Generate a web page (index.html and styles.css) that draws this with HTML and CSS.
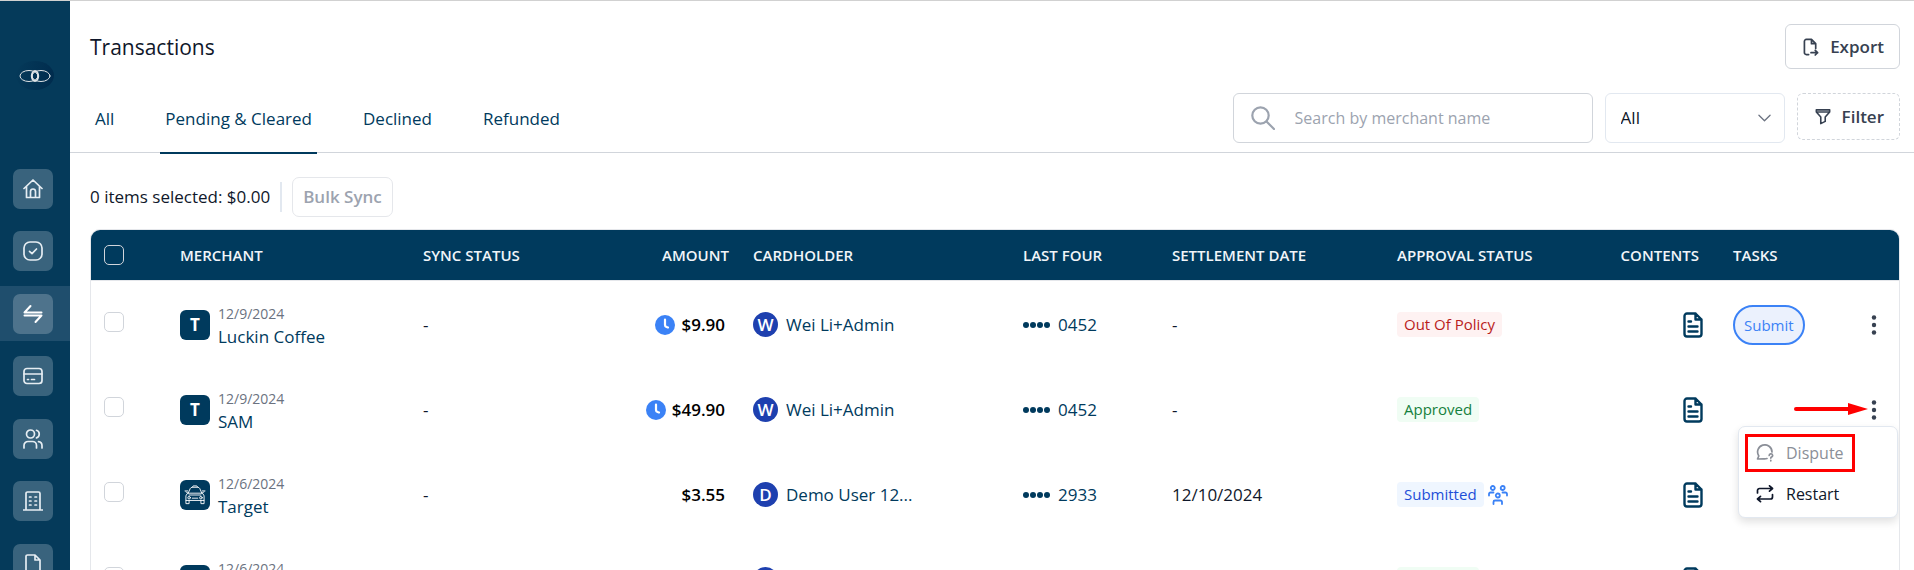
FILE: index.html
```html
<!DOCTYPE html>
<html lang="en">
<head>
    <meta charset="utf-8">
    <title>Transactions</title>
    <link rel="stylesheet" href="styles.css">
</head>
<body>
<svg class="sprite" aria-hidden="true">
    <symbol id="i-doc" viewBox="0 0 20 26">
        <path d="M12.5 1.500H4A2.500 2.500 0 0 0 1.500 4v18A2.500 2.500 0 0 0 4 24.500h12a2.500 2.500 0 0 0 2.500-2.500V7.500zM12.500 1.500v6h6M5.500 9.500H8M5.500 14.500h9M5.500 19.500h9"/>
    </symbol>
    <symbol id="i-clock" viewBox="0 0 20 20">
        <circle cx="10" cy="10" r="10"/>
        <path d="M10 4.500v5.500q0 1.500 1.500 2l1.500.5" fill="none" stroke="#fff" stroke-width="2.200" stroke-linecap="round"/>
    </symbol>
    <symbol id="i-dots" viewBox="0 0 6 20">
        <circle cx="3" cy="2.500" r="2.200"/><circle cx="3" cy="10" r="2.200"/><circle cx="3" cy="17.500" r="2.200"/>
    </symbol>
</svg>

<div class="app">
    <aside class="sidebar">
        <a class="logo" href="#" aria-label="Home">
            <svg viewBox="0 0 32 14" width="32" height="14">
                <ellipse cx="10" cy="7" rx="9" ry="5.500"/>
                <ellipse cx="22" cy="7" rx="9" ry="5.500"/>
                <ellipse cx="16" cy="7" rx="3.200" ry="5" stroke-width="2"/>
            </svg>
        </a>
        <nav class="side-nav">
            <a href="#" aria-label="Dashboard"><span>
                <svg viewBox="0 0 20 20"><path d="M1 9.500 10 1l9 8.500M3.500 7.500V18.500h13V7.500M7.500 18.500V12.500a2.500 2.500 0 0 1 5 0v6"/></svg>
            </span></a>
            <a href="#" aria-label="Approvals"><span>
                <svg viewBox="0 0 20 20"><rect x="1" y="1" width="18" height="18" rx="6"/><path d="m6.500 10.300 2.500 2.400 4.500-4.700"/></svg>
            </span></a>
            <a href="#" class="active" aria-label="Transactions"><span>
                <svg viewBox="0 0 20 20"><path d="M1.500 8.500h17M1.500 8.500 7.500 2M18.500 11.500h-17M18.500 11.500l-6 6.500"/></svg>
            </span></a>
            <a href="#" aria-label="Cards"><span>
                <svg viewBox="0 0 20 20"><rect x="1" y="2.500" width="18" height="15" rx="3"/><path d="M1 8h18M4.500 13.500h1M8.500 13.500h3"/></svg>
            </span></a>
            <a href="#" aria-label="Users"><span>
                <svg viewBox="0 0 20 20"><circle cx="7.500" cy="5" r="4"/><path d="M1 19v-2.500a4 4 0 0 1 4-4h4.500a4 4 0 0 1 4 4V19M13.500 1.300a4 4 0 0 1 0 7.600M15.500 12.700a4 4 0 0 1 3.500 4V19"/></svg>
            </span></a>
            <a href="#" aria-label="Company"><span>
                <svg viewBox="0 0 20 20"><path d="M.5 19h19M3 19V2.500A1.500 1.500 0 0 1 4.500 1h11A1.500 1.500 0 0 1 17 2.500V19M6.500 6H8M12 6h1.500M6.500 10H8M12 10h1.500M6.500 14H8M12 14h1.500"/></svg>
            </span></a>
            <a href="#" aria-label="Documents"><span>
                <svg viewBox="0 0 20 20"><path d="M12 1H4.500A1.500 1.500 0 0 0 3 2.500v15A1.500 1.500 0 0 0 4.500 19h11a1.500 1.500 0 0 0 1.500-1.500V6zM12 1v5h5"/></svg>
            </span></a>
        </nav>
    </aside>

    <main class="main">
        <header class="page-header">
            <div class="title-row">
                <h1>Transactions</h1>
                <button type="button" class="btn btn-export">
                    <svg viewBox="0 0 17 19" width="16" height="18"><path d="M6 17.500H3.500A2 2 0 0 1 1.500 15.500v-12a2 2 0 0 1 2-2H9l4.500 4.500v5M9 1.500V6h4.500M8.500 15.500h7M13 13l2.500 2.500L13 18"/></svg>
                    Export
                </button>
            </div>
            <div class="filter-row">
                <nav class="tabs">
                    <a href="#">All</a>
                    <a href="#" class="active">Pending &amp; Cleared</a>
                    <a href="#">Declined</a>
                    <a href="#">Refunded</a>
                </nav>
                <div class="controls">
                    <label class="search">
                        <svg viewBox="0 0 24 24" width="24" height="24"><circle cx="9.500" cy="9.500" r="8.200"/><path d="m15.500 15.500 7.500 7.500"/></svg>
                        <input type="text" placeholder="Search by merchant name" aria-label="Search by merchant name">
                    </label>
                    <div class="select">
                        <select aria-label="Transaction type">
                            <option>All</option>
                        </select>
                        <svg viewBox="0 0 14 8" width="13" height="8"><path d="m1 1 6 6 6-6"/></svg>
                    </div>
                    <button type="button" class="btn btn-filter">
                        <svg viewBox="0 0 18 18" width="16" height="17"><path d="M1.500 1.500h15v2.500L11.500 9.500v5l-5 2.500V9.500L1.500 4zM2 4h14"/></svg>
                        Filter
                    </button>
                </div>
            </div>
        </header>

        <section class="content">
            <div class="bulk">
                <span class="selected">0 items selected: $0.00</span>
                <span class="divider"></span>
                <button type="button" class="btn-bulk" disabled>Bulk Sync</button>
            </div>

            <div class="table-box">
                <table class="transactions">
                    <colgroup>
                        <col class="c-check"><col class="c-merchant"><col class="c-sync"><col class="c-amount">
                        <col class="c-holder"><col class="c-last"><col class="c-date"><col class="c-approval">
                        <col class="c-contents"><col class="c-tasks"><col class="c-more">
                    </colgroup>
                    <thead>
                    <tr>
                        <th><input type="checkbox" aria-label="Select all"></th>
                        <th>MERCHANT</th>
                        <th>SYNC STATUS</th>
                        <th class="right">AMOUNT</th>
                        <th>CARDHOLDER</th>
                        <th>LAST FOUR</th>
                        <th>SETTLEMENT DATE</th>
                        <th>APPROVAL STATUS</th>
                        <th class="contents">CONTENTS</th>
                        <th>TASKS</th>
                        <th></th>
                    </tr>
                    </thead>
                    <tbody>
                    <tr>
                        <td><input type="checkbox" aria-label="Select Luckin Coffee"></td>
                        <td>
                            <div class="merchant">
                                <span class="tile">T</span>
                                <div><span class="date">12/9/2024</span><span class="name">Luckin Coffee</span></div>
                            </div>
                        </td>
                        <td>-</td>
                        <td><div class="amount"><svg class="clock"><use href="#i-clock"/></svg>$9.90</div></td>
                        <td><div class="holder"><span class="avatar">W</span>Wei Li+Admin</div></td>
                        <td><div class="last-four"><span class="bullets"><i></i><i></i><i></i><i></i></span>0452</div></td>
                        <td>-</td>
                        <td><span class="tag tag-red">Out Of Policy</span></td>
                        <td class="contents"><svg class="doc"><use href="#i-doc"/></svg></td>
                        <td><button type="button" class="btn-submit">Submit</button></td>
                        <td class="more"><button type="button" aria-label="More actions"><svg class="dots"><use href="#i-dots"/></svg></button></td>
                    </tr>
                    <tr>
                        <td><input type="checkbox" aria-label="Select SAM"></td>
                        <td>
                            <div class="merchant">
                                <span class="tile">T</span>
                                <div><span class="date">12/9/2024</span><span class="name">SAM</span></div>
                            </div>
                        </td>
                        <td>-</td>
                        <td><div class="amount"><svg class="clock"><use href="#i-clock"/></svg>$49.90</div></td>
                        <td><div class="holder"><span class="avatar">W</span>Wei Li+Admin</div></td>
                        <td><div class="last-four"><span class="bullets"><i></i><i></i><i></i><i></i></span>0452</div></td>
                        <td>-</td>
                        <td><span class="tag tag-green">Approved</span></td>
                        <td class="contents"><svg class="doc"><use href="#i-doc"/></svg></td>
                        <td></td>
                        <td class="more">
                            <button type="button" aria-label="More actions"><svg class="dots"><use href="#i-dots"/></svg></button>
                            <svg class="arrow" viewBox="0 0 74 14"><path d="M2 7h54" stroke="#f00" stroke-width="4" stroke-linecap="round"/><path d="M54 1v12l20-6z" fill="#f00"/></svg>
                            <div class="menu">
                                <button type="button" class="highlight" disabled>
                                    <svg viewBox="0 0 18 18" width="18" height="18"><path d="M11 14.500a8 8 0 0 1-3.500.3L1.500 15l1.300-3A7.200 7.200 0 1 1 16 8M13.200 11.500a1.700 1.700 0 1 1 2.200 1.600q-.6.300-.6 1M14.800 16.400v.4"/></svg>
                                    Dispute
                                </button>
                                <button type="button">
                                    <svg viewBox="0 0 18 18" width="18" height="18"><path d="M1.500 8V5.500a2 2 0 0 1 2-2h13M13.500.8l3 2.700-3 2.700M16.500 9.500V12a2 2 0 0 1-2 2h-13M4.500 11.300l-3 2.700 3 2.700"/></svg>
                                    Restart
                                </button>
                            </div>
                        </td>
                    </tr>
                    <tr>
                        <td><input type="checkbox" aria-label="Select Target"></td>
                        <td>
                            <div class="merchant">
                                <span class="tile">
                                    <svg viewBox="0 0 24 22" width="22" height="20"><path d="M9 2.500 10 1h4l1 1.500M4.500 9l2.200-5Q7.500 2.500 9 2.500h6q1.500 0 2.300 1.500l2.200 5M2 7.500 4.500 9h15L22 7.500M1 6.500h3M20 6.500h3M4.500 9Q2 10 2 12v5h20v-5q0-2-2.500-3M5.500 11h13M2 17v3.500h3.500V17M22 17v3.500h-3.500V17M9 14.500h6"/><circle cx="5.500" cy="14" r="1.400"/><circle cx="18.500" cy="14" r="1.400"/></svg>
                                </span>
                                <div><span class="date">12/6/2024</span><span class="name">Target</span></div>
                            </div>
                        </td>
                        <td>-</td>
                        <td><div class="amount">$3.55</div></td>
                        <td><div class="holder"><span class="avatar">D</span>Demo User 12...</div></td>
                        <td><div class="last-four"><span class="bullets"><i></i><i></i><i></i><i></i></span>2933</div></td>
                        <td>12/10/2024</td>
                        <td>
                            <span class="tag tag-blue">Submitted</span>
                            <svg class="group" viewBox="0 0 20 20"><circle cx="4.800" cy="3" r="2"/><circle cx="14.700" cy="3" r="2"/><circle cx="9.800" cy="10.500" r="2"/><path d="M1 10.500V9a1.500 1.500 0 0 1 1.500-1.500h3M19 10.500V9a1.500 1.500 0 0 0-1.500-1.500h-3M5.500 19v-2A1.500 1.500 0 0 1 7 15.500h5.500A1.500 1.500 0 0 1 14 17v2"/></svg>
                        </td>
                        <td class="contents"><svg class="doc"><use href="#i-doc"/></svg></td>
                        <td></td>
                        <td class="more"></td>
                    </tr>
                    <tr>
                        <td><input type="checkbox" aria-label="Select transaction"></td>
                        <td>
                            <div class="merchant">
                                <span class="tile"></span>
                                <div><span class="date">12/6/2024</span><span class="name">&nbsp;</span></div>
                            </div>
                        </td>
                        <td></td>
                        <td><div class="amount pending"><svg class="clock"><use href="#i-clock"/></svg></div></td>
                        <td><div class="holder"><span class="avatar"></span></div></td>
                        <td></td>
                        <td></td>
                        <td><span class="tag tag-green tag-empty"></span></td>
                        <td class="contents"><svg class="doc"><use href="#i-doc"/></svg></td>
                        <td></td>
                        <td class="more"><button type="button" aria-label="More actions"><svg class="dots"><use href="#i-dots"/></svg></button></td>
                    </tr>
                    </tbody>
                </table>
            </div>
        </section>
    </main>
</div>
</body>
</html>
```

FILE: styles.css
```css
* {
    box-sizing: border-box;
    margin: 0;
    padding: 0;
}

body {
    font-family: "Open Sans", "Noto Sans", sans-serif;
    font-size: 17px;
    line-height: 24px;
    color: #0f172a;
    background: #fff;
}

button, input, select {
    font: inherit;
    color: inherit;
}

button {
    background: none;
    border: 0;
}

a {
    color: #003a5d;
    text-decoration: none;
}

svg {
    fill: none;
    stroke: currentColor;
    stroke-linecap: round;
    stroke-linejoin: round;
    flex-shrink: 0;
}

.sprite {
    position: absolute;
    width: 0;
    height: 0;
}

.app {
    display: flex;
    height: 100vh;
    overflow: hidden;
    border-top: 1px solid #d1d1d1;
}

/* sidebar */
.sidebar {
    width: 70px;
    flex-shrink: 0;
    padding-top: 60px;
    background: #053a5a;
    color: #e6edf2;
}

.logo {
    display: flex;
    align-items: center;
    justify-content: center;
    width: 38px;
    height: 29px;
    margin: 0 auto;
    border-radius: 50%;
    background: linear-gradient(100deg, #053a5a, #002b4d);
    color: #dfe3e6;
}

.side-nav {
    display: flex;
    flex-direction: column;
    justify-content: space-between;
    height: 430px;
    margin-top: 71px;
}

.side-nav a {
    display: flex;
    align-items: center;
    height: 55px;
    padding-left: 13px;
    color: inherit;
}

.side-nav a.active {
    background: #1f4e6d;
    color: #fff;
}

.side-nav span {
    display: flex;
    align-items: center;
    justify-content: center;
    width: 40px;
    height: 40px;
    border-radius: 7px;
    background: rgba(255, 255, 255, 0.21);
}

.side-nav svg {
    width: 20px;
    height: 20px;
    stroke-width: 1.7;
}

.side-nav .active svg {
    stroke-width: 2;
}

/* header */
.main {
    flex: 1;
    min-width: 0;
}

.page-header {
    padding: 23px 14px 0 20px;
    border-bottom: 1px solid #d1d5db;
}

.title-row {
    display: flex;
    align-items: center;
    justify-content: space-between;
    height: 45px;
}

h1 {
    font-size: 21px;
    font-weight: 500;
    line-height: 30px;
}

.btn {
    display: flex;
    align-items: center;
    gap: 11px;
    padding: 0 15px 0 17px;
    border: 1px solid #d1d5db;
    border-radius: 6px;
    font-weight: 600;
    color: #374151;
}

.btn svg {
    stroke-width: 1.8;
}

.btn-export {
    height: 45px;
}

.filter-row {
    display: flex;
    justify-content: space-between;
    margin-top: 24px;
}

.tabs {
    display: flex;
    gap: 41px;
    margin-bottom: -2px;
}

.tabs a {
    display: flex;
    align-items: center;
    height: 61px;
    padding: 0 5px 8px;
    border-bottom: 2px solid transparent;
    font-weight: 500;
}

.tabs a.active {
    border-color: #003a5d;
}

.controls {
    display: flex;
    align-items: flex-start;
    gap: 12px;
}

.search {
    display: flex;
    align-items: center;
    gap: 20px;
    width: 360px;
    height: 50px;
    padding: 0 17px;
    border: 1px solid #d1d5db;
    border-radius: 6px;
    color: #9ca3af;
}

.search svg {
    stroke-width: 2.2;
}

.search input {
    flex: 1;
    min-width: 0;
    border: 0;
    outline: 0;
    font-size: 16px;
}

.search input::placeholder {
    color: #9ca3af;
    opacity: 1;
}

.select {
    display: flex;
    align-items: center;
    position: relative;
    width: 180px;
    height: 50px;
    border: 1px solid #e2e8f0;
    border-radius: 6px;
}

.select select {
    width: 100%;
    height: 100%;
    padding: 0 15px;
    border: 0;
    background: none;
    appearance: none;
}

.select svg {
    position: absolute;
    right: 13px;
    color: #6b7280;
    stroke-width: 1.4;
    pointer-events: none;
}

.btn-filter {
    height: 47px;
    border-style: dashed;
}

/* content */
.content {
    padding: 24px 14px 0 20px;
}

.bulk {
    display: flex;
    align-items: center;
    gap: 10px;
    margin-bottom: 12px;
    font-weight: 500;
}

.divider {
    width: 2px;
    height: 30px;
    background: #e2e8f0;
}

.btn-bulk {
    height: 40px;
    padding: 0 10px;
    border: 1px solid #e5e7eb;
    border-radius: 7px;
    font-weight: 600;
    color: #9ca3af;
}

.table-box {
    border: 1px solid #e5e7eb;
    border-radius: 10px;
    overflow: hidden;
}

.transactions {
    width: 100%;
    table-layout: fixed;
    border-spacing: 0;
}

.c-check { width: 77px; }
.c-merchant { width: 243px; }
.c-sync { width: 200px; }
.c-amount { width: 130px; }
.c-holder { width: 270px; }
.c-last { width: 149px; }
.c-date { width: 225px; }
.c-approval { width: 215px; }
.c-contents { width: 121px; }
.c-tasks { width: 124px; }
.c-more { width: 54px; }

.transactions th {
    height: 51px;
    padding: 0 12px;
    border-bottom: 1px solid #e5e7eb;
    background: #003a5d;
    color: #f1f5f9;
    font-size: 15px;
    font-weight: 600;
    text-align: left;
    white-space: nowrap;
}

.transactions td {
    height: 85px;
    padding: 2px 12px 0;
    white-space: nowrap;
}

.transactions th.right {
    text-align: right;
}

.transactions .contents {
    text-align: right;
}

.transactions th.contents {
    padding-right: 22px;
}

.transactions td.contents {
    padding-right: 18px;
}

.transactions input {
    display: block;
    width: 20px;
    height: 20px;
    margin-left: 1px;
    border: 1px solid #d1d5db;
    border-radius: 5px;
    appearance: none;
}

.transactions td input {
    margin-bottom: 6px;
}

.merchant {
    display: flex;
    align-items: center;
    gap: 8px;
    color: #003a5d;
}

.tile {
    display: flex;
    align-items: center;
    justify-content: center;
    width: 30px;
    height: 30px;
    border-radius: 6px;
    background: #003a5d;
    color: #fff;
    font-size: 17px;
    font-weight: 700;
}

.date, .name {
    display: block;
    line-height: 23px;
}

.date {
    font-size: 14px;
    color: #6b7280;
}

.amount {
    display: flex;
    align-items: center;
    justify-content: flex-end;
    gap: 6px;
    padding-right: 4px;
    font-weight: 600;
    color: #000;
}

.amount.pending {
    padding-right: 53px;
}

.clock {
    width: 20px;
    height: 20px;
    fill: #3b82f6;
    stroke: none;
}

.holder {
    display: flex;
    align-items: center;
    gap: 8px;
    color: #003a5d;
}

.avatar {
    display: flex;
    align-items: center;
    justify-content: center;
    width: 25px;
    height: 25px;
    border-radius: 50%;
    background: #1e40af;
    color: #fff;
    font-weight: 600;
}

.last-four {
    display: flex;
    align-items: center;
    gap: 8px;
    color: #003a5d;
}

.bullets {
    display: flex;
    gap: 1px;
}

.bullets i {
    width: 6px;
    height: 6px;
    border-radius: 50%;
    background: #003a5d;
}

.tag {
    display: inline-block;
    height: 25px;
    padding: 0 7px;
    border-radius: 4px;
    font-size: 15px;
    font-weight: 500;
    line-height: 25px;
    vertical-align: middle;
}

.tag-red {
    background: #fef2f2;
    color: #b91c1c;
}

.tag-green {
    background: #f0fdf4;
    color: #15803d;
}

.tag-blue {
    background: #eff6ff;
    color: #1d4ed8;
}

.tag-empty {
    width: 82px;
}

.group {
    width: 20px;
    height: 20px;
    color: #3b82f6;
    stroke-width: 1.8;
    vertical-align: middle;
}

.doc {
    width: 20px;
    height: 26px;
    color: #003a5d;
    stroke-width: 2.4;
    vertical-align: middle;
}

.btn-submit {
    height: 40px;
    padding: 0 9px;
    border: 2px solid #3b82f6;
    border-radius: 20px;
    background: #ebf1fd;
    color: #3b82f6;
    font-size: 15px;
    font-weight: 500;
}

.transactions .more {
    position: relative;
    padding: 0 22px 0 0;
    text-align: right;
}

.dots {
    width: 6px;
    height: 20px;
    fill: #374151;
    stroke: none;
    vertical-align: middle;
}

.arrow {
    position: absolute;
    top: 36px;
    right: 31px;
    width: 74px;
    height: 14px;
    stroke: none;
}

.menu {
    display: flex;
    flex-direction: column;
    align-items: flex-start;
    gap: 3px;
    position: absolute;
    top: 60px;
    right: 1px;
    z-index: 1;
    width: 160px;
    padding: 7px 6px 4px;
    border: 1px solid #e2e8f0;
    border-radius: 7px;
    background: #fff;
    box-shadow: 0 4px 8px rgba(0, 0, 0, 0.12);
}

.menu button {
    display: flex;
    align-items: center;
    gap: 12px;
    height: 38px;
    padding: 0 11px;
    font-size: 16px;
}

.menu svg {
    stroke-width: 1.7;
}

.menu .highlight {
    padding: 0 8px;
    border: 3px solid #f00;
    color: #8b8f98;
}
```
